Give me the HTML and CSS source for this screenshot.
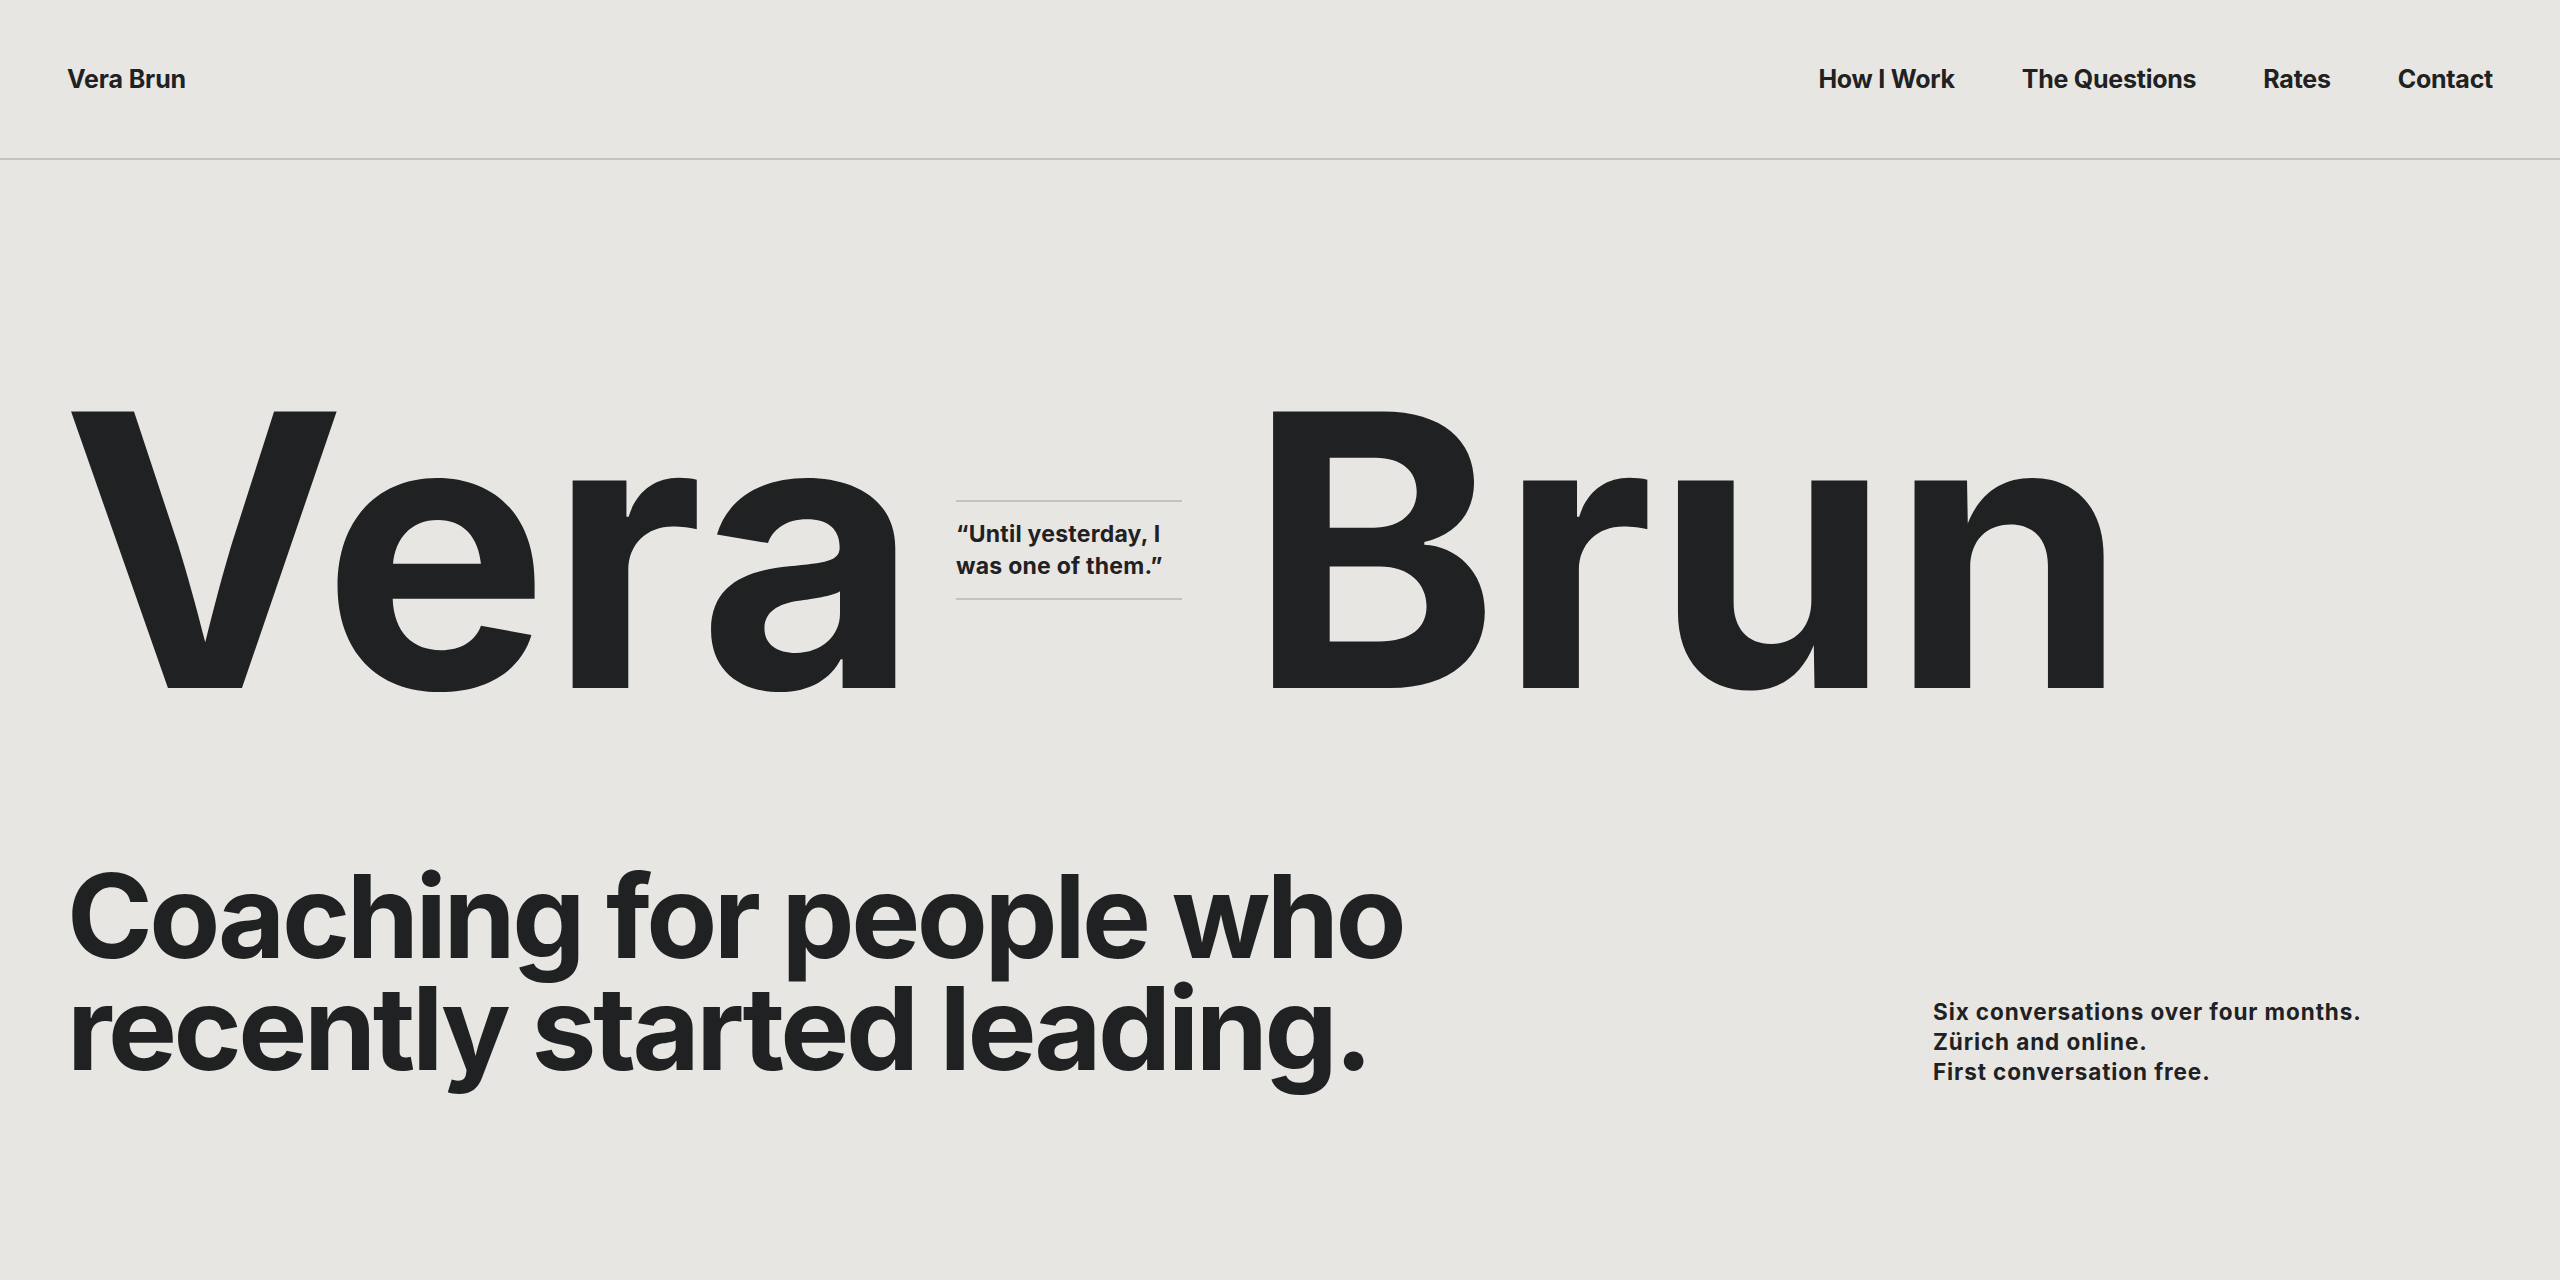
FILE: index.html
```html
<!DOCTYPE html>
<html lang="en">
<head>
<meta charset="utf-8">
<title>Vera Brun — Coaching</title>
<link rel="stylesheet" href="styles.css">
</head>
<body>
<header class="site-header">
  <a class="logo" href="#">Vera Brun</a>
  <nav class="nav">
    <a href="#">How I Work</a>
    <a href="#">The Questions</a>
    <a href="#">Rates</a>
    <a href="#">Contact</a>
  </nav>
</header>
<main class="main">
  <section class="name-row">
    <h1 class="name name-first">Vera</h1>
    <blockquote class="quote">“Until yesterday, I was one of them.”</blockquote>
    <span class="name name-last">Brun</span>
  </section>
  <section class="intro">
    <h2 class="headline">Coaching for people who recently started leading.</h2>
    <p class="facts">Six conversations over four months.<br>Zürich and online.<br>First conversation free.</p>
  </section>
</main>
</body>
</html>
```
FILE: styles.css
```css
* { box-sizing: border-box; }
html, body { margin: 0; padding: 0; }
body {
  background: #e7e6e2;
  color: #1f2123;
  font-family: "Inter", "Noto Sans", sans-serif;
  width: 2560px;
  height: 1280px;
  overflow: hidden;
}
a { color: inherit; text-decoration: none; }

.site-header {
  height: 160px;
  padding: 0 67px;
  display: flex;
  align-items: center;
  justify-content: space-between;
  border-bottom: 2px solid #c3c2bd;
}
.logo {
  font-size: 25px;
  font-weight: 700;
  letter-spacing: -0.005em;
}
.nav {
  display: flex;
  gap: 67px;
}
.nav a {
  font-size: 25px;
  font-weight: 700;
  letter-spacing: -0.01em;
}

.main {
  padding: 0 67px;
}
.name-row {
  margin-top: 200px;
  display: flex;
  align-items: center;
}
.name {
  margin: 0;
  font-size: 380px;
  line-height: 380px;
  font-weight: 700;
  letter-spacing: 0;
}
.name-first {
  margin-left: -5px;
}
.quote {
  margin: 0 0 0 37px;
  width: 226px;
  padding: 16px 0;
  border-top: 2px solid #c3c2bd;
  border-bottom: 2px solid #c3c2bd;
  font-size: 23px;
  line-height: 32px;
  font-weight: 700;
  letter-spacing: 0.01em;
}
.name-last {
  margin-left: 66px;
}

.intro {
  margin-top: 120px;
  display: grid;
  grid-template-columns: 1fr 560px;
  align-items: end;
}
.headline {
  margin: 0;
  font-size: 116px;
  line-height: 112px;
  font-weight: 700;
  letter-spacing: -0.03em;
  max-width: 1420px;
}
.facts {
  margin: 0 0 -3px;
  font-size: 22.5px;
  line-height: 30px;
  font-weight: 700;
  letter-spacing: 0.04em;
}
```
